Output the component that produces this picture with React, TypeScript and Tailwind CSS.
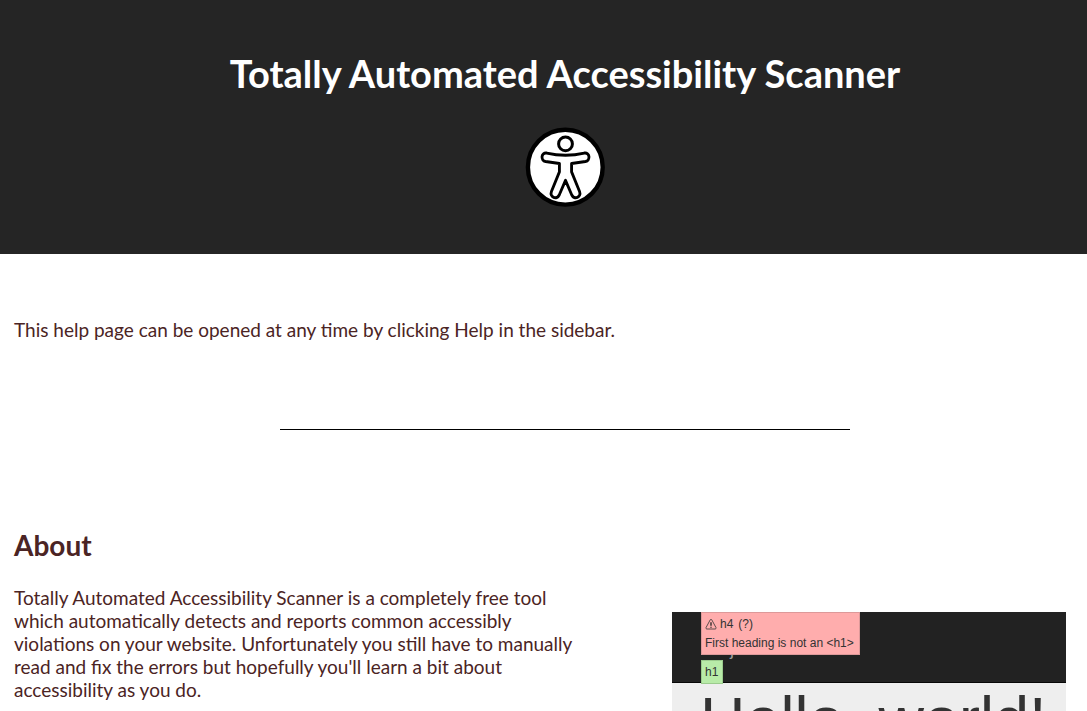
function AccessibilityLogo() {
  return (
    <svg viewBox="0 0 80 80" className="size-20" role="img" aria-label="Accessibility">
      <circle cx="40.300" cy="40.200" r="37.400" fill="#fff" stroke="#000" strokeWidth="4.400" />
      <g fill="#fff" stroke="#000" strokeWidth="3" strokeLinejoin="round">
        <circle cx="40.500" cy="16.900" r="6.900" />
        <path
          transform="translate(2.500 .3) scale(.95 1)"
          d="M20.200 25.800C34 28.800 46 28.800 59.800 25.800C65.600 24.800 66.600 33.200 61 34.200L46.400 36.300V44.500L54.800 64.200C57 70 49.200 73 46.600 67.700L40 53L33.400 67.700C30.800 73 23 70 25.200 64.200L33.600 44.500V36.300L19 34.200C13.400 33.200 14.400 24.800 20.200 25.800Z"
        />
      </g>
    </svg>
  );
}

function WarningIcon() {
  return (
    <svg viewBox="0 0 12 12" className="size-3" aria-hidden="true">
      <path d="M5.300 1.700L1 9.600Q.6 10.800 1.800 11H10.200Q11.400 10.800 11 9.600L6.700 1.700Q6 .8 5.300 1.700Z" fill="none" stroke="#333" strokeWidth=".8" />
      <path d="M6 4.200V7.800M6 8.800V9.800" stroke="#222" strokeWidth="1.300" />
    </svg>
  );
}

function ScanPreview() {
  return (
    <figure className="mt-[82px] w-[394px] shrink-0 font-['Liberation_Sans',sans-serif] text-[#333]">
      <div className="relative h-[71px] border-b border-[#080808] bg-[#222]">
        <span className="absolute top-[27px] left-[30px] text-lg leading-5 text-[#9d9d9d]">Project name</span>
        <div className="absolute top-0 left-[29px] border border-[#dd9999] bg-[#ffadad] pt-px pr-[5px] pl-[3px] text-xs whitespace-nowrap">
          <div className="flex h-5 items-center gap-[3px]">
            <WarningIcon />
            <span className="mr-0.5">h4</span>
            <span>(?)</span>
          </div>
          <div className="h-5 leading-[18px]">First heading is not an &lt;h1&gt;</div>
        </div>
        <span className="absolute top-12 left-[29px] z-10 h-6 border border-[#9bcb8d] bg-[#b8eba8] pr-1 pl-[3px] text-xs leading-[22px]">
          h1
        </span>
      </div>
      <div className="bg-[#eee] px-7 pb-8">
        <p className="text-[63px] leading-[72px] whitespace-nowrap">Hello, world!</p>
      </div>
    </figure>
  );
}

export default function App() {
  return (
    <div className="min-h-screen overflow-x-hidden bg-white font-['Lato',sans-serif] text-[19px] leading-[23px] text-[#4b2424]">
      <header className="flex flex-col items-center bg-[#252525] pt-[50px] pb-[47px] pl-[43px] text-white">
        <h1 className="text-[38px] leading-[46px] font-bold">Totally Automated Accessibility Scanner</h1>
        <div className="mt-[31px]">
          <AccessibilityLogo />
        </div>
      </header>
      <main>
        <p className="mt-16 px-[14px]">This help page can be opened at any time by clicking Help in the sidebar.</p>
        <div className="mt-[88px] flex justify-center pl-[43px]">
          <hr className="w-[570px] border-black" />
        </div>
        <section className="mt-[100px] flex justify-between pr-[21px] pl-[14px]">
          <div className="w-[570px]">
            <h2 className="text-[28px] leading-[30px] font-bold">About</h2>
            <p className="mt-[26px]">
              Totally Automated Accessibility Scanner is a completely free tool which automatically detects and reports
              common accessibly violations on your website. Unfortunately you still have to manually read and fix the
              errors but hopefully you'll learn a bit about accessibility as you do.
            </p>
          </div>
          <ScanPreview />
        </section>
      </main>
    </div>
  );
}
